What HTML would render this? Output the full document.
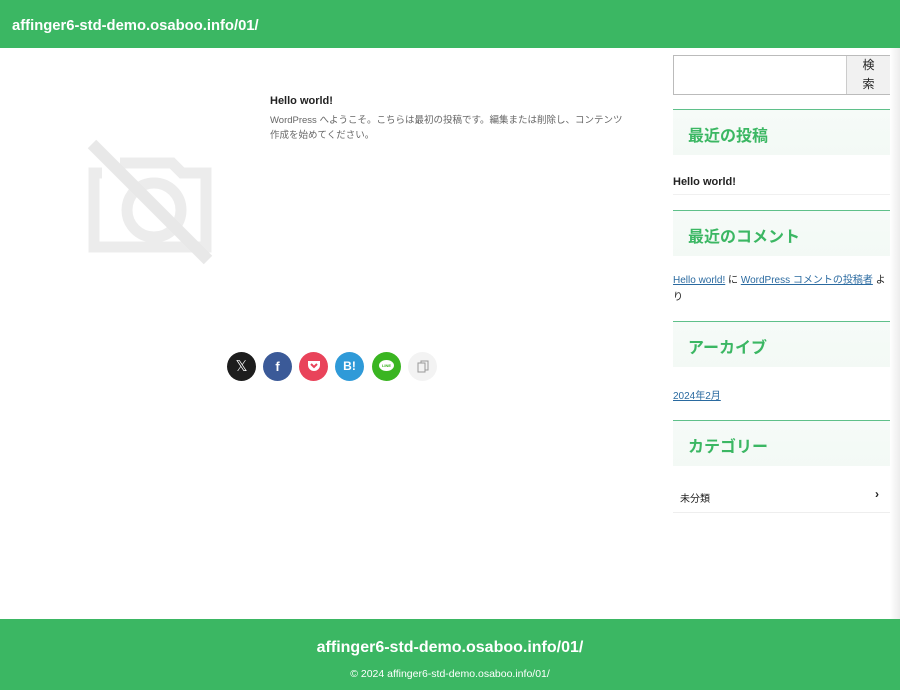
<!DOCTYPE html>
<html><head><meta charset="utf-8"><style>
*{margin:0;padding:0;box-sizing:border-box}
body{width:900px;height:690px;overflow:hidden;background:#fff;font-family:"Liberation Sans","Noto Sans CJK JP",sans-serif;position:relative;color:#222}
.hdr{position:absolute;left:0;top:0;width:900px;height:48px;background:#3bb763}
.hdr span{position:absolute;left:12px;top:18px;color:#fff;font-weight:bold;font-size:14.8px}
.ftr{position:absolute;left:0;top:619px;width:900px;height:71px;background:#3bb763;color:#fff;text-align:center}
.ftr .t{position:absolute;left:0;width:900px;top:20px;font-weight:bold;font-size:16px}
.ftr .c{position:absolute;left:0;width:900px;top:49px;font-size:10.5px}
.shadow{position:absolute;right:0;top:48px;width:10px;height:571px;background:linear-gradient(to right,#fff,#ececec)}
.abs{position:absolute}
.ttl{left:270px;top:95px;font-weight:bold;font-size:11px}
.ex{left:270px;top:113px;font-size:9.5px;color:#666;line-height:15px;white-space:nowrap}
.sns{position:absolute;top:352px;width:29px;height:29px;border-radius:50%;color:#fff;font-weight:bold;text-align:center;line-height:29px;font-size:13px}
.search{left:673px;top:55px;width:218px;height:40px;border:1px solid #bbb}
.search .b{position:absolute;right:0;top:0;width:44px;height:38px;background:#f1f1f1;border-left:1px solid #ccc;font-size:12px;text-align:center;line-height:19px}
.wh{position:absolute;left:673px;width:218px;height:46px;border-top:1px solid #5fc08a;background:linear-gradient(#f6fbf8,#f3f9f5);color:#3bb763;font-weight:bold;font-size:16px;padding:12px 0 0 15px}
.lnk{color:#2a6aa0;text-decoration:underline;font-size:10px}
</style></head><body>
<div class="hdr"><span>affinger6-std-demo.osaboo.info/01/</span></div>
<svg class="abs" style="left:84px;top:136px" width="134" height="132" viewBox="0 0 134 132">
<g fill="none" stroke="#ececec" stroke-width="11">
<path d="M18 37 H10 V111 H122 V37 H98 L88 27 H36"/>
<circle cx="70" cy="74" r="27"/>
</g>
<path d="M8 8 L124 124" stroke="#e8e8e8" stroke-width="12"/>
</svg>
<div class="abs ttl">Hello world!</div>
<div class="abs ex">WordPress へようこそ。こちらは最初の投稿です。編集または削除し、コンテンツ<br>作成を始めてください。</div>
<div class="sns" style="left:227px;background:#1d1d1d;font-weight:normal;font-size:15px">𝕏</div>
<div class="sns" style="left:263px;background:#3b5a98">f</div>
<div class="sns" style="left:299px;background:#e9435a"><svg width="14" height="12" viewBox="0 0 14 12" style="margin-top:8px"><path d="M1 1h12v4a6 6 0 0 1-12 0z" fill="#fff"/><path d="M4 4l3 3 3-3" stroke="#e9435a" stroke-width="2" fill="none"/></svg></div>
<div class="sns" style="left:335px;background:#2f9ad8;font-size:12px">B!</div>
<div class="sns" style="left:372px;background:#3ab521"><div style="width:15px;height:11px;background:#fff;border-radius:50%;margin:8px auto 0;font-size:4px;line-height:11px;color:#3ab521">LINE</div></div>
<div class="sns" style="left:408px;background:#f3f3f3"><svg width="12" height="13" viewBox="0 0 12 13" style="margin-top:8px"><rect x="1" y="3" width="7" height="9" fill="none" stroke="#999"/><path d="M4 3V1h7v9H8" fill="none" stroke="#999"/></svg></div>
<div class="abs search"><div class="b">検<br>索</div></div>
<div class="wh" style="top:109px">最近の投稿</div>
<div class="abs" style="left:673px;top:176px;font-weight:bold;font-size:11px">Hello world!</div>
<div class="abs" style="left:673px;top:194px;width:218px;border-top:1px solid #f0f0f0"></div>
<div class="wh" style="top:210px">最近のコメント</div>
<div class="abs" style="left:673px;top:272px;width:216px;font-size:10px;line-height:17px"><span class="lnk">Hello world!</span> に <span class="lnk">WordPress コメントの投稿者</span> より</div>
<div class="wh" style="top:321px">アーカイブ</div>
<div class="abs lnk" style="left:673px;top:387px">2024年2月</div>
<div class="wh" style="top:420px">カテゴリー</div>
<div class="abs" style="left:680px;top:490px;font-size:10px">未分類</div>
<div class="abs" style="left:875px;top:487px;font-size:12px;font-weight:bold">›</div>
<div class="abs" style="left:673px;top:512px;width:218px;border-top:1px solid #eee"></div>
<div class="shadow"></div>
<div class="ftr"><div class="t">affinger6-std-demo.osaboo.info/01/</div><div class="c">© 2024 affinger6-std-demo.osaboo.info/01/</div></div>
</body></html>
